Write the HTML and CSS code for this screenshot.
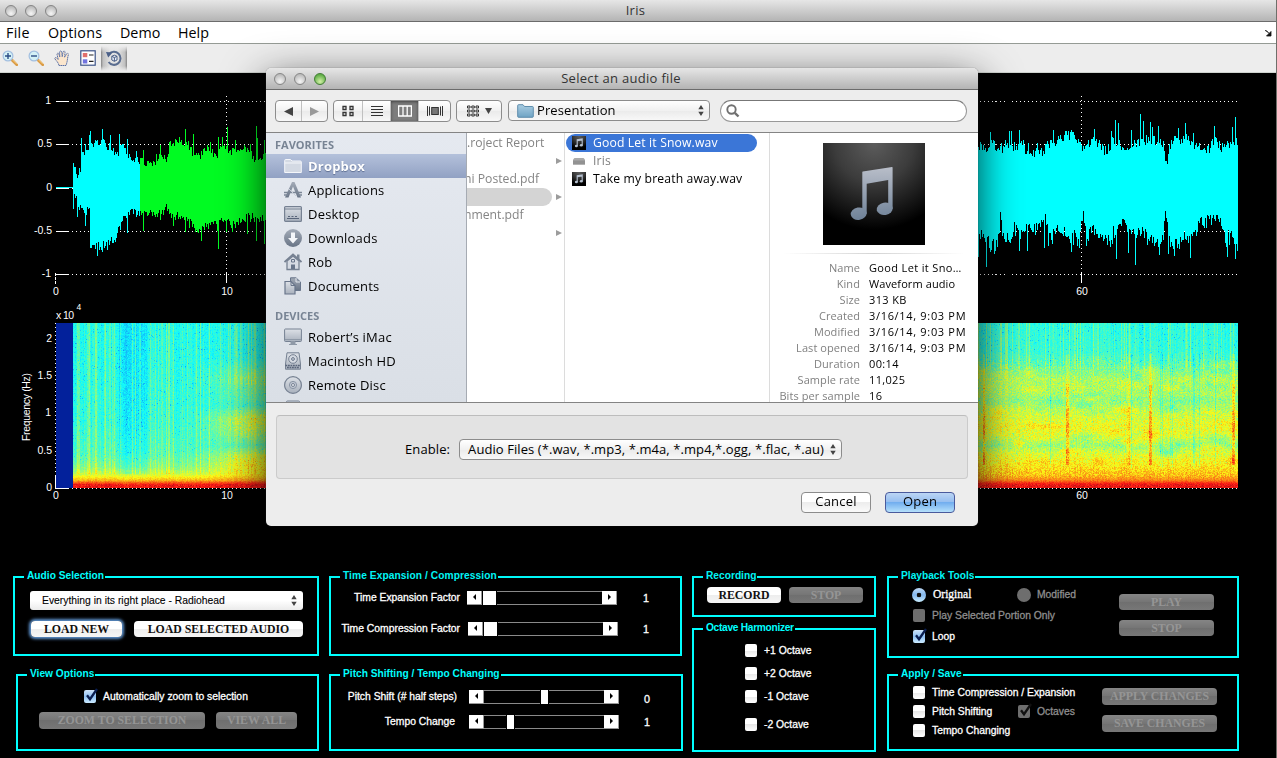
FILE: index.html
```html
<!DOCTYPE html>
<html lang="en">
<head>
<meta charset="utf-8">
<title>Iris</title>
<link rel="stylesheet" href="styles.css">
</head>
<body>
<svg width="0" height="0" class="defs">
  <defs>
    <linearGradient id="steel" x1="0" y1="0" x2="0" y2="1"><stop offset="0" stop-color="#a3abb7"/><stop offset="1" stop-color="#687486"/></linearGradient>
    <linearGradient id="pale" x1="0" y1="0" x2="0" y2="1"><stop offset="0" stop-color="#dde1e7"/><stop offset="1" stop-color="#a9b1bd"/></linearGradient>
    <linearGradient id="noteFill" gradientUnits="userSpaceOnUse" x1="0" y1="24" x2="0" y2="77"><stop offset="0" stop-color="#b9bec9"/><stop offset="1" stop-color="#6f8298"/></linearGradient>
    <radialGradient id="noteBg" cx=".5" cy="0" r=".85"><stop offset="0" stop-color="#5c5c5c"/><stop offset=".45" stop-color="#3c3c3c"/><stop offset="1" stop-color="#000"/></radialGradient>
    <linearGradient id="folder" x1="0" y1="0" x2="0" y2="1"><stop offset="0" stop-color="#a9cde2"/><stop offset="1" stop-color="#6fa3c4"/></linearGradient>
    <symbol id="song" viewBox="0 0 102 102">
      <rect width="102" height="102" fill="url(#noteBg)"/>
      <g fill="url(#noteFill)">
        <path d="M39.300 29Q39.300 28.500 39.800 28.400L69 24Q69.600 24 69.600 24.600V66H65.200V37L43.700 40.700V71H39.300z"/>
        <ellipse cx="35.700" cy="70.700" rx="8" ry="6.200" transform="rotate(-10 35.700 70.700)"/>
        <ellipse cx="61.700" cy="65.800" rx="8" ry="6.200" transform="rotate(-10 61.700 65.800)"/>
      </g>
    </symbol>
    <symbol id="songmini" viewBox="0 0 14 14">
      <rect width="14" height="14" fill="url(#noteBg)"/>
      <path d="M5.200 10V3.800L10.200 3V9M5.200 4.800 10.200 4" fill="none" stroke="#b5c0cf" stroke-width="1.100"/>
      <ellipse cx="4.400" cy="10" rx="1.500" ry="1.200" fill="#b5c0cf"/><ellipse cx="9.300" cy="9.300" rx="1.500" ry="1.200" fill="#b5c0cf"/>
    </symbol>
    <symbol id="check" viewBox="0 0 15 16"><path d="M3 8.200 6 12.200 13 2" fill="none" stroke="currentColor" stroke-width="2.300"/></symbol>
    <symbol id="updown" viewBox="0 0 6 11"><path d="M3 0 5.700 4.300H.3zM3 11 .3 6.700H5.700z" fill="#444"/></symbol>
  </defs>
</svg>

<header class="titlebar">
  <div class="lights"><i></i><i></i><i></i></div>
  <h1>Iris</h1>
</header>
<nav class="menubar">
  <span class="m-file">File</span><span class="m-options">Options</span><span class="m-demo">Demo</span><span class="m-help">Help</span>
  <svg class="undock" width="8" height="8" viewBox="0 0 8 8"><path d="M1 1.500C3 1.500 4 3 5 4.500M7 2.500V7H2.500z" fill="#111" stroke="#111" stroke-width=".8"/></svg>
</nav>
<div class="toolbar">
  <svg viewBox="0 0 16 16"><path d="M10 10 14.800 14.800" stroke="#d99a44" stroke-width="2.600" stroke-linecap="round"/><path d="M10.500 9.800 14.500 13.800" stroke="#f6cd80" stroke-width="1"/><circle cx="6" cy="6" r="4.900" fill="#d4f1f6" stroke="#a3bfe0" stroke-width="1.200"/><path d="M3 6H9M6 3V9" stroke="#2c4d86" stroke-width="1.400"/></svg>
  <svg viewBox="0 0 16 16"><path d="M10 10 14.800 14.800" stroke="#d99a44" stroke-width="2.600" stroke-linecap="round"/><path d="M10.500 9.800 14.500 13.800" stroke="#f6cd80" stroke-width="1"/><circle cx="6" cy="6" r="4.900" fill="#d4f1f6" stroke="#a3bfe0" stroke-width="1.200"/><path d="M3 6H9" stroke="#2c4d86" stroke-width="1.400"/></svg>
  <svg viewBox="0 0 16 16"><path d="M5 15.500C4.500 12.500 2 10.500.6 8.500 1.200 7 2.600 7.600 4.200 9.500L3 4.200C3.200 2.600 4.800 2.800 5 4.200L5.800 7 5.600 2C6 .4 7.500.6 7.800 2L8.200 6.800 9 2C9.600.6 11.200 1 11 2.400L10.600 7.200 12.600 3.800C13.600 2.800 14.800 3.600 14.300 5 13.400 8 13.500 11.500 12 15.500z" fill="#fbe6cd" stroke="#5b72a8" stroke-width="1" stroke-dasharray="1.600 .5"/></svg>
  <svg viewBox="0 0 16 16"><rect x=".8" y=".8" width="14.400" height="14.400" fill="#fff" stroke="#3c5489" stroke-width="1.200"/><rect x="2.800" y="3" width="4.500" height="4.200" fill="#e2706d"/><rect x="2.800" y="9.300" width="4.500" height="4.200" fill="#7274df"/><path d="M9 5H13.500M9 11.300H13.500" stroke="#222" stroke-width="1.200"/></svg>
  <div class="pressed"><svg viewBox="0 0 16 16"><path d="M3 4.200A6.500 6.500 0 1 1 2.600 12" fill="none" stroke="#5a6d90" stroke-width="2"/><path d="M0 2 6.500 2.600 2.200 7.600z" fill="#4b6088"/><path d="M5.800 6.300 8.400 5.200 11 6.300V10L8.400 11.300 5.800 10zM5.800 6.300 8.400 7.600 11 6.300M8.400 7.600V11.300" fill="#e8edf7" stroke="#4b6088" stroke-width="1"/></svg></div>
</div>

<section class="plots">
  <svg width="1276" height="488" viewBox="0 72 1276 488">
    <g class="grid">
      <path d="M59.500 101.500H1238M59.500 144.500H1238M59.500 188.500H1238M59.500 231.500H1238M59.500 274.500H1238M226.500 96V274M1081.500 96V274"/>
    </g>
    <path class="tick" d="M56 101.500H68M56 144.500H68M56 188.500H68M56 231.500H68M55 274.500H68M226.500 272V283M1081.500 272V283"/>
    <path class="tick dash" d="M55.500 273V284"/>
    <path id="wave" stroke="#0ff" fill="none" shape-rendering="crispEdges"/>
    <path id="selection" stroke="#00fb22" fill="none" shape-rendering="crispEdges"/>
    <g class="labels">
      <text x="51" y="104" text-anchor="end">1</text>
      <text x="52" y="147" text-anchor="end">0.5</text>
      <text x="52" y="191" text-anchor="end">0</text>
      <text x="52" y="234" text-anchor="end">-0.5</text>
      <text x="51" y="277" text-anchor="end">-1</text>
      <text x="56" y="295" text-anchor="middle">0</text>
      <text x="227" y="295" text-anchor="middle">10</text>
      <text x="1082" y="295" text-anchor="middle">60</text>
      <text x="56" y="319" textLength="18">x 10</text>
      <text x="76.500" y="309.500" class="exp">4</text>
      <text x="52" y="342" text-anchor="end">2</text>
      <text x="52" y="379" text-anchor="end">1.5</text>
      <text x="51" y="416" text-anchor="end">1</text>
      <text x="52" y="454" text-anchor="end">0.5</text>
      <text x="52" y="491" text-anchor="end">0</text>
      <text x="56" y="499" text-anchor="middle">0</text>
      <text x="227" y="499" text-anchor="middle">10</text>
      <text x="1082" y="499" text-anchor="middle">60</text>
      <text transform="translate(29.500 441) rotate(-90)" textLength="68">Frequency (Hz)</text>
    </g>
    <foreignObject x="56" y="323" width="1182" height="165"><canvas id="spectrum" width="1182" height="165"></canvas></foreignObject>
    <path class="grid" d="M55.500 323V488M56 488.500H1238"/>
    <path class="tick" d="M55.500 476V488.500H68"/>
  </svg>
</section>

<main class="controls">
  <div class="col col-a">
    <section class="panel p-audio">
      <h2>Audio Selection</h2>
      <div class="select"><span>Everything in its right place - Radiohead</span><svg width="6" height="11"><use href="#updown"/></svg></div>
      <div class="btns"><button class="b focus">LOAD NEW</button><button class="b wide">LOAD SELECTED AUDIO</button></div>
    </section>
    <section class="panel p-view">
      <h2>View Options</h2>
      <label class="opt"><b class="box on"><svg width="15" height="16"><use href="#check"/></svg></b><span>Automatically zoom to selection</span></label>
      <div class="btns"><button class="b off zoomsel">ZOOM TO SELECTION</button><button class="b off viewall">VIEW ALL</button></div>
    </section>
  </div>

  <div class="col col-b">
    <section class="panel p-time">
      <h2>Time Expansion / Compression</h2>
      <div class="srow s1"><span>Time Expansion Factor</span><div class="slider"><i class="l"></i><u></u><em></em><i class="r"></i></div><output>1</output></div>
      <div class="srow s2"><span>Time Compression Factor</span><div class="slider"><i class="l"></i><u></u><em></em><i class="r"></i></div><output>1</output></div>
    </section>
    <section class="panel p-pitch">
      <h2>Pitch Shifting / Tempo Changing</h2>
      <div class="srow s3"><span>Pitch Shift (# half steps)</span><div class="slider"><i class="l"></i><em class="before"></em><u class="thin"></u><em></em><i class="r"></i></div><output>0</output></div>
      <div class="srow s4"><span>Tempo Change</span><div class="slider"><i class="l"></i><em class="before"></em><u class="thin"></u><em></em><i class="r"></i></div><output>1</output></div>
    </section>
  </div>

  <div class="col col-c">
    <section class="panel p-rec">
      <h2>Recording</h2>
      <div class="btns"><button class="b">RECORD</button><button class="b off">STOP</button></div>
    </section>
    <section class="panel p-oct">
      <h2>Octave Harmonizer</h2>
      <label class="opt"><b class="box"></b><span>+1 Octave</span></label>
      <label class="opt"><b class="box"></b><span>+2 Octave</span></label>
      <label class="opt"><b class="box"></b><span>-1 Octave</span></label>
      <label class="opt"><b class="box"></b><span>-2 Octave</span></label>
    </section>
  </div>

  <div class="col col-d">
    <section class="panel p-play">
      <h2>Playback Tools</h2>
      <div class="split">
        <div class="opts">
          <div class="pair"><label class="opt serif"><b class="radio on"></b><span>Original</span></label><label class="opt dim second"><b class="radio"></b><span>Modified</span></label></div>
          <label class="opt dim"><b class="box"></b><span>Play Selected Portion Only</span></label>
          <label class="opt"><b class="box on"><svg width="15" height="16"><use href="#check"/></svg></b><span>Loop</span></label>
        </div>
        <div class="stack"><button class="b off">PLAY</button><button class="b off">STOP</button></div>
      </div>
    </section>
    <section class="panel p-apply">
      <h2>Apply / Save</h2>
      <div class="split">
        <div class="opts">
          <label class="opt"><b class="box"></b><span class="tce">Time Compression / Expansion</span></label>
          <div class="pair"><label class="opt"><b class="box"></b><span>Pitch Shifting</span></label><label class="opt dim second"><b class="box"><svg width="15" height="16"><use href="#check"/></svg></b><span>Octaves</span></label></div>
          <label class="opt"><b class="box"></b><span>Tempo Changing</span></label>
        </div>
        <div class="stack"><button class="b off">APPLY CHANGES</button><button class="b off">SAVE CHANGES</button></div>
      </div>
    </section>
  </div>
</main>

<div class="dialog" role="dialog">
  <header class="d-title"><div class="lights"><i></i><i></i><i class="go"></i></div><h1>Select an audio file</h1></header>
  <div class="d-tools">
    <div class="seg nav"><span><svg width="9" height="9"><path d="M0 4.500 9 0V9z" fill="#444"/></svg></span><span><svg width="9" height="9"><path d="M9 4.500 0 0V9z" fill="#999"/></svg></span></div>
    <div class="seg views">
      <span><svg width="12" height="12"><path d="M1 1.500H4V4.500H1zM8 1.500H11V4.500H8zM1 7.500H4V10.500H1zM8 7.500H11V10.500H8z" fill="none" stroke="#333" stroke-width="1.300"/></svg></span>
      <span><svg width="12" height="12"><path d="M0 1.500H12M0 4.500H12M0 7.500H12M0 10.500H12" stroke="#333" stroke-width="1.200"/></svg></span>
      <span class="on"><svg width="14" height="12"><path d="M.6 1H13.400V11H.6zM5 1V11M9.200 1V11" fill="none" stroke="#fff" stroke-width="1.300"/></svg></span>
      <span><svg width="16" height="12"><path d="M.5 1V11M2.500 1.500V10.500M13.500 1.500V10.500M15.500 1V11" stroke="#333"/><rect x="4.700" y="2.500" width="6.600" height="7" fill="#777" stroke="#333"/></svg></span>
    </div>
    <div class="seg arrange"><svg width="12" height="12"><path d="M.5 1H3V3H.5zM4.800 1H7.300V3H4.800zM9 1H11.500V3H9zM.5 5H3V7H.5zM4.800 5H7.300V7H4.800zM9 5H11.500V7H9zM.5 9H3V11H.5zM4.800 9H7.300V11H4.800zM9 9H11.500V11H9z" fill="none" stroke="#333"/></svg><svg width="7" height="6"><path d="M0 0H7L3.500 6z" fill="#444"/></svg></div>
    <div class="popup path"><svg width="17" height="14"><path d="M.7 3V1.500Q.7.7 1.500.7H6L7.500 2.500H15.500Q16.300 2.500 16.300 3.500V12.500Q16.300 13.300 15.500 13.300H1.500Q.7 13.300.7 12.500z" fill="url(#folder)" stroke="#5285a6" stroke-width=".9"/></svg><span>Presentation</span><svg class="ud" width="6" height="11"><use href="#updown"/></svg></div>
    <div class="search"><svg width="14" height="14"><circle cx="5.500" cy="5.500" r="4.200" fill="none" stroke="#707070" stroke-width="1.900"/><path d="M8.800 8.800 12.500 12.500" stroke="#707070" stroke-width="2.400"/></svg></div>
  </div>
  <div class="browser">
    <aside>
      <h3>FAVORITES</h3>
      <div class="item sel"><svg viewBox="0 0 18 18"><path d="M.7 3.500Q.7 2.500 1.700 2.500H6.500L8 4H16.300Q17.300 4 17.300 5V15.500H.7zM.7 6H17.300" fill="#d3d9e3" stroke="#f4f6fa"/></svg>Dropbox</div>
      <div class="item"><svg viewBox="0 0 18 18"><path d="M8 1H10.500L17 16.500H13.500L9 5.500 4.500 16.500H1z" fill="url(#steel)"/><path d="M0 11.500H18M0 14H4M14 14H18" stroke="#7b8696" stroke-width="1.700"/><path d="M5 8 12 15" stroke="#c9cfd9" stroke-width="1"/></svg>Applications</div>
      <div class="item"><svg viewBox="0 0 18 18"><rect x=".6" y="1.600" width="16.800" height="14.800" rx="1" fill="url(#pale)" stroke="#768192" stroke-width="1.200"/><path d="M1 4H17" stroke="#768192"/><path d="M3 13.500H15M4 11.500H6M7.500 11.500H9.500M11 11.500H13" stroke="#59657a" stroke-width="1.200"/></svg>Desktop</div>
      <div class="item"><svg viewBox="0 0 18 18"><circle cx="9" cy="9" r="9" fill="url(#steel)"/><path d="M7 3.500H11V9H14L9 14.500 4 9H7z" fill="#f4f6f9"/></svg>Downloads</div>
      <div class="item"><svg viewBox="0 0 18 18"><path d="M13 5V1.500H15.500V8" fill="#7b8696"/><path d="M3 8V16.500H15V8L9 3z" fill="#d6dbe3" stroke="#768192" stroke-width="1.300"/><path d="M.5 9 9 1.500 17.500 9" fill="none" stroke="#768192" stroke-width="1.700"/><path d="M7 16V11.500H11V16z" fill="#68758a"/><path d="M7.500 6.500H10.500V9H7.500z" fill="none" stroke="#68758a"/></svg>Rob</div>
      <div class="item"><svg viewBox="0 0 18 18"><path d="M6.500.8H12L16.500 5V13.500H6.500z" fill="url(#steel)" stroke="#68758a"/><path d="M12 1V5H16" fill="none" stroke="#e4e8ef"/><path d="M1 4.500H7L11 8.500V17H1z" fill="url(#pale)" stroke="#68758a" stroke-width="1.200"/><path d="M7 4.500V8.500H11" fill="none" stroke="#68758a"/></svg>Documents</div>
      <h3 class="dev">DEVICES</h3>
      <div class="item"><svg viewBox="0 0 18 18"><rect x=".6" y="1" width="16.800" height="12.500" rx=".8" fill="url(#pale)" stroke="#768192"/><path d="M1 11.500H17" stroke="#8f99a7"/><path d="M7 13.500H11V16H7zM5 16.500H13" fill="#8f99a7" stroke="#8f99a7"/></svg>Robert’s iMac</div>
      <div class="item"><svg viewBox="0 0 18 18"><path d="M3 .8H15L16.500 12V17.200H1.500V12z" fill="url(#pale)" stroke="#768192"/><path d="M1.500 13.500H16.500M3 15.500H15" stroke="#59657a" stroke-width="1.500" stroke-dasharray="1.800 .7"/><circle cx="9" cy="7" r="4.300" fill="#d5dae2" stroke="#768192"/><circle cx="9" cy="7" r="1.400" fill="none" stroke="#68758a"/></svg>Macintosh HD</div>
      <div class="item"><svg viewBox="0 0 18 18"><circle cx="9" cy="9" r="8.400" fill="url(#pale)" stroke="#768192" stroke-width="1.200"/><circle cx="9" cy="9" r="3.600" fill="#c2c9d4" stroke="#8a95a5"/><circle cx="9" cy="9" r="1.500" fill="#edf0f4" stroke="#768192"/></svg>Remote Disc</div>
      <div class="item"><svg viewBox="0 0 18 18"><rect x="2.500" y="1" width="13" height="15.500" rx="1" fill="#d5dae2" stroke="#768192"/></svg></div>
    </aside>
    <ul class="c1">
      <li>.roject Report</li>
      <li class="more"></li>
      <li class="cut">ni Posted.pdf</li>
      <li class="more pill"></li>
      <li class="cut">nment.pdf</li>
      <li class="more"></li>
    </ul>
    <ul class="c2">
      <li class="chosen"><svg width="14" height="14"><use href="#songmini"/></svg><span>Good Let it Snow.wav</span></li>
      <li class="dimmed"><svg width="14" height="14"><path d="M1 5.500 2.500 4H11.500L13 5.500V10.500H1z" fill="#aaa"/><path d="M1 6.500H13V10.500H1z" fill="#929292"/></svg><span>Iris</span></li>
      <li><svg width="14" height="14"><use href="#songmini"/></svg><span>Take my breath away.wav</span></li>
    </ul>
    <div class="preview">
      <svg class="art" width="102" height="102"><use href="#song"/></svg>
      <hr>
      <dl>
        <dt>Name</dt><dd>Good Let it Sno…</dd>
        <dt>Kind</dt><dd class="snug">Waveform audio</dd>
        <dt>Size</dt><dd>313 KB</dd>
        <dt>Created</dt><dd class="date">3/16/14, 9:03 PM</dd>
        <dt>Modified</dt><dd class="date">3/16/14, 9:03 PM</dd>
        <dt>Last opened</dt><dd class="date">3/16/14, 9:03 PM</dd>
        <dt>Duration</dt><dd>00:14</dd>
        <dt>Sample rate</dt><dd>11,025</dd>
        <dt>Bits per sample</dt><dd>16</dd>
      </dl>
    </div>
  </div>
  <footer>
    <div class="filter"><span>Enable:</span><div class="popup types"><span>Audio Files (*.wav, *.mp3, *.m4a, *.mp4,*.ogg, *.flac, *.au)</span><svg class="ud" width="6" height="11"><use href="#updown"/></svg></div></div>
    <div class="actions"><button class="aqua">Cancel</button><button class="aqua blue">Open</button></div>
  </footer>
</div>
<script src="plots.js"></script>
</body>
</html>
```

FILE: styles.css
```css
* { box-sizing: border-box; }
html, body { margin: 0; height: 758px; overflow: hidden; }
body {
  width: 1277px; display: flex; flex-direction: column; background: #000;
  font-family: "Open Sans", "Noto Sans", sans-serif; font-size: 13px; color: #000;
  border-right: 1px solid #6f6f6a;
}
h1, h2, h3, ul, dl, dd, hr { margin: 0; padding: 0; font-weight: normal; }
ul { list-style: none; }
button { font: inherit; border: 0; padding: 0; margin: 0; }
.defs { position: absolute; }

/* window chrome */
.titlebar, .d-title { display: flex; align-items: center; background: linear-gradient(#e6e6e6, #b4b4b4); border-bottom: 1px solid #6c6c6c; height: 22px; flex: none; }
.titlebar h1, .d-title h1 { flex: 1; text-align: center; font-size: 13px; color: #333; line-height: 20px; letter-spacing: .3px; }
.titlebar h1 { padding: 0 71px 2px 0; }
.lights { display: flex; gap: 8px; padding-left: 5px; width: 66px; flex: none; }
.lights i { width: 12px; height: 12px; flex: none; border-radius: 50%; border: 1px solid #858585; background: radial-gradient(circle at 50% 75%, #f5f5f5, #bcbcbc 75%); }
.lights .go { background: radial-gradient(circle at 50% 75%, #d3f0a8, #5fae45 75%); border-color: #417c34; }
.menubar { height: 22px; flex: none; display: flex; align-items: center; background: #fff; border-bottom: 1px solid #959b95; padding: 0 4px 0 6px; font-size: 14.300px; }
.m-file { width: 42px; letter-spacing: .3px; } .m-options { width: 72px; letter-spacing: .2px; } .m-demo { width: 58px; }
.undock { margin-left: auto; }
.toolbar { height: 29px; flex: none; display: flex; align-items: center; background: #ededed; border-bottom: 1px solid #cfd3cf; padding-left: 2px; gap: 10px; }
.toolbar svg { width: 16px; height: 16px; flex: none; }
.pressed { width: 26px; height: 25px; margin-left: -5px; display: grid; place-items: center; background: linear-gradient(#ededed, transparent 25%, transparent 80%, #ededed), linear-gradient(90deg, #858585, #c0c0c0 8%, #e2e2e2 35%, #e2e2e2 65%, #c0c0c0 92%, #858585); }

/* plots */
.plots { height: 488px; margin-top: -1px; flex: none; }
.plots svg, .plots canvas { display: block; }
.grid { stroke: #fff; stroke-dasharray: 1 3; fill: none; shape-rendering: crispEdges; }
.tick { stroke: #fff; fill: none; shape-rendering: crispEdges; }
.dash { stroke-dasharray: 3 1; }
.labels { font-family: "Liberation Sans", sans-serif; font-size: 10.500px; fill: #fff; }
.exp { font-size: 8.500px; }

/* control panels */
.controls { display: flex; gap: 10px; padding: 16px 0 0 13px; font-family: "Liberation Sans", Arial, sans-serif; font-size: 10.350px; color: #fff; -webkit-text-stroke: .3px; }
.col { display: flex; flex-direction: column; gap: 18px; }
.col-a { width: 306px; } .col-b { width: 353px; } .col-c { width: 184px; gap: 11px; margin-right: 1px; } .col-d { width: 352px; gap: 16px; }
.panel { border: 2px solid #0ff; }
.panel h2 { width: fit-content; height: 12px; line-height: 12px; margin: -8px 0 0 9px; padding: 0 1px 0 3px; background: #000; color: #0ff; font-size: 10.200px; font-weight: bold; white-space: nowrap; -webkit-text-stroke: 0; }
.p-audio, .p-time { height: 80px; }
.p-view { height: 77px; margin-left: 3px; }
.p-pitch { height: 77px; margin-right: -1px; }
.p-rec { height: 41px; } .p-oct { height: 124px; }
.p-play { height: 82px; } .p-apply { height: 77px; }
.p-oct h2 { letter-spacing: -.3px; }
.p-time h2 { letter-spacing: .08px; }

.select { margin: 9px 0 0 15px; width: 273px; height: 19px; border-radius: 3px; background: linear-gradient(#fff 50%, #ebebeb); color: #000; display: flex; align-items: center; justify-content: space-between; padding: 0 6px 1px 12px; -webkit-text-stroke: .1px; }
.btns { display: flex; }
.b { height: 16px; width: 74px; border-radius: 4px; background: linear-gradient(#fff 50%, #ededed 50%, #f6f6f6); font: bold 11.800px/15px "Liberation Serif", serif; color: #111; white-space: nowrap; -webkit-text-stroke: 0; }
.b.off { background: linear-gradient(#858585, #757575 50%, #6f6f6f 50%, #777); color: #959595; }
.p-audio .btns { margin: 11px 0 0 16px; gap: 12px; }
.focus { width: 91px; box-shadow: 0 0 3px 2px #5d93cf; }
.wide { width: 169px; }
.opt { display: flex; align-items: center; gap: 7px; height: 13px; line-height: 13px; white-space: nowrap; }
.box { width: 12px; height: 13px; flex: none; border-radius: 2px; background: linear-gradient(#fff 50%, #e8e8e8 50%, #fff); color: #111; }
.box svg { display: block; margin: -3px 0 0 0; }
.box.on { background: linear-gradient(#cfe4fa, #8fc0f2 50%, #cbebff); color: #0a1e50; }
.radio { width: 14px; height: 14px; margin: 0 -1px; flex: none; border-radius: 50%; background: #6e6e6e; }
.radio.on { background: radial-gradient(circle, #111 2px, transparent 2.600px), linear-gradient(#c0dbf7, #83b7ee 50%, #c9edff); }
.dim { color: #8e8e8e; } .dim .box { background: #6e6e6e; }
.serif span { font-family: "Liberation Serif", serif; font-size: 11.500px; margin-left: 1px; }
.p-view .opt { margin: 10px 0 9px 66px; }
.p-view .btns { margin-left: 21px; gap: 11px; }
.p-view .b { height: 17px; } .zoomsel { width: 166px; } .viewall { width: 81px; }

.srow { display: flex; align-items: center; height: 15px; }
.srow span { width: 129px; text-align: right; white-space: nowrap; margin-right: 7px; padding-bottom: 1px; }
.srow output { margin-left: 26px; font-size: 10.800px; }
.slider { width: 150px; height: 14px; display: flex; flex: none; }
.slider i { width: 15px; height: 14px; background: #fff; display: grid; place-items: center; border-right: 1px solid #999; border-bottom: 1px solid #999; }
.slider i::before { content: ""; border: 3px solid transparent; }
.slider .l::before { border-right-color: #000; margin-left: -3px; }
.slider .r::before { border-left-color: #000; margin-right: -3px; }
.slider u { width: 13px; background: #fff; margin: 0 1px; }
.slider .thin { width: 7px; }
.slider em { flex: 1; border: 1px solid #8a8a8a; border-left: 0; border-right: 0; }
.s1 { margin-top: 8px; } .s2 { margin-top: 16px; }
.s2 .slider { margin-left: 1px; } .s2 output { margin-left: 25px; }
.s3 { margin-top: 9px; } .s4 { margin-top: 10px; }
.s3 span { width: 126px; margin-right: 12px; } .s4 span { width: 124px; margin-right: 14px; }
.s3 output, .s4 output { margin-left: 25px; }
.s3 output { margin-top: 4px; }
.s3 .slider .before { flex: none; width: 56px; } .s4 .slider .before { flex: none; width: 22px; }

.p-rec .btns { margin: 5px 0 0 13px; gap: 8px; }
.p-oct .opt { margin: 10px 0 0 51px; }
.p-oct .opt:nth-of-type(4) { margin-top: 15px; }
.split { display: flex; justify-content: space-between; }
.pair { display: flex; height: 13px; }
.pair label:first-child { width: 105px; }
.opts { display: flex; flex-direction: column; margin-left: 24px; }
.p-play .opts { gap: 8px; margin-top: 6px; }
.p-apply .opts { gap: 6px; margin-top: 6px; }
.p-apply .opt span { padding-bottom: 1px; }
.stack { display: flex; flex-direction: column; }
.p-play .stack { margin: 12px 23px 0 0; gap: 10px; } .p-play .b { width: 95px; }
.p-apply .stack { margin: 8px 20px 0 0; gap: 10px; } .p-apply .b { width: 115px; height: 17px; }

/* file dialog floats over the main window */
.dialog { position: absolute; left: 266px; top: 68px; width: 712px; height: 458px; border-radius: 5px; overflow: hidden; background: #ededed; box-shadow: 0 14px 44px rgba(0,0,0,.8), 0 0 1px #555; display: flex; flex-direction: column; }
.d-title .lights { padding-left: 8px; }
.d-title h1 { padding-right: 68px; line-height: 21px; }
.d-tools { height: 43px; flex: none; display: flex; align-items: flex-start; padding: 10px 0 0 9px; border-bottom: 1px solid #848484; }
.seg, .popup { display: flex; border: 1px solid #8c8c8c; border-radius: 4px; height: 22px; background: linear-gradient(#fff, #f1f1f1 50%, #eaeaea 50%, #f8f8f8); }
.seg span { display: grid; place-items: center; flex: 1; }
.seg span + span { border-left: 1px solid #c0c0c0; }
.nav { width: 53px; margin-right: 5px; }
.views { width: 118px; margin-right: 5px; }
.views span { flex: 0 0 28px; }
.views span:last-child { flex: 1; }
.seg .on { background: #7d7d7d; box-shadow: inset 0 1px 3px #444; }
.arrange { width: 46px; align-items: center; justify-content: center; gap: 6px; margin-right: 6px; }
.popup { align-items: center; height: 21px; padding: 0 5px 0 8px; white-space: nowrap; }
.popup span { padding-bottom: 2px; }
.popup .ud { margin-left: auto; }
.path { width: 202px; margin-right: 10px; gap: 3px; letter-spacing: .1px; }
.search { width: 247px; height: 22px; border: 1px solid #999; border-top-color: #777; border-radius: 11px; background: #fff; padding: 3px 0 0 5px; }

.browser { height: 270px; flex: none; display: flex; background: #fff; border-bottom: 1px solid #848484; overflow: hidden; }
aside { width: 201px; flex: none; border-right: 1px solid #a6abb3; background: linear-gradient(#e5e9f0, #dadfe6); overflow: hidden; }
aside h3 { font-size: 11px; font-weight: bold; color: #788494; height: 21px; line-height: 22px; padding-left: 9px; padding-top: 1px; }
aside .dev { height: 27px; padding-top: 7px; }
.item { height: 24px; flex: none; display: flex; align-items: center; gap: 6px; padding-left: 18px; font-size: 13px; letter-spacing: .2px; }
.item svg { width: 18px; height: 18px; }
.sel { background: linear-gradient(#b4c1db, #91a1c3); color: #fff; font-weight: bold; text-shadow: 0 1px 1px #5e6f92; padding-bottom: 1px; }
.c1 { width: 98px; flex: none; border-right: 1px solid #dcdcdc; padding-top: 1px; color: #858585; overflow: hidden; }
.c1 li, .c2 li { height: 18px; line-height: 17px; font-size: 12.200px; white-space: nowrap; }
.c1 .cut { margin-left: -3px; }
.more { display: flex; align-items: center; justify-content: space-between; padding: 0 2px 1px 0; }
.more::before { content: ""; width: 85px; height: 18px; border-radius: 0 9px 9px 0; }
.pill::before { background: #d4d4d4; }
.more::after { content: ""; border-left: 6px solid #9c9c9c; border-top: 3.500px solid transparent; border-bottom: 3.500px solid transparent; }
.c2 { width: 205px; flex: none; border-right: 1px solid #dcdcdc; padding: 1px 12px 0 1px; letter-spacing: .14px; }
.c2 li { display: flex; align-items: center; gap: 7px; padding-left: 6px; border-radius: 9px; }
.c2 span { padding-bottom: 2px; }
.chosen { background: #3b76d7; color: #fff; }
.dimmed { color: #808080; }
.preview { flex: 1; min-width: 0; }
.art { display: block; margin: 10px 0 0 53px; }
.preview hr { border: 0; height: 1px; margin: 8px 13px 6px; background: linear-gradient(90deg, transparent, #d4d4d4 50%, transparent); }
.preview dl { display: grid; grid-template-columns: 90px 1fr; column-gap: 9px; grid-auto-rows: 16px; font-size: 11px; line-height: 16px; white-space: nowrap; }
dt { text-align: right; color: #808080; margin-left: -10px; letter-spacing: .08px; }
dd { letter-spacing: .35px; }
dd.snug { letter-spacing: .1px; }
dd.date { letter-spacing: .68px; }

footer { flex: 1; padding: 12px 10px 0; }
.filter { height: 64px; border: 1px solid #cbcbcb; border-top-color: #bdbdbd; border-radius: 4px; background: #e3e3e3; display: flex; align-items: center; padding: 5px 0 0 128px; gap: 9px; }
.filter > span { padding-bottom: 1px; letter-spacing: .1px; }
.types { width: 383px; letter-spacing: .08px; }
.actions { display: flex; justify-content: flex-end; gap: 14px; padding: 13px 13px 0 0; }
.aqua { width: 70px; height: 21px; border: 1px solid #8c8c8c; border-radius: 4px; background: linear-gradient(#fff 50%, #ededed 50%, #fafafa); line-height: 17px; padding-bottom: 2px; letter-spacing: .2px; }
.aqua.blue { border-color: #4a5a9c; background: linear-gradient(#bcd5f4, #94bdf0 50%, #72aeef 50%, #b5e0fb); }
```

FILE: plots.js
```js
// Seeded generator keeps both plots identical on every load.
let seed = 20140316;
const rnd = () => {
  seed = (seed * 1664525 + 1013904223) >>> 0;
  return seed / 4294967296;
};
const lerp = (nodes, x) => {
  for (let i = 1; i < nodes.length; i++) {
    if (x <= nodes[i][0]) {
      const [x0, y0] = nodes[i - 1], [x1, y1] = nodes[i];
      return y0 + (y1 - y0) * Math.max(0, (x - x0) / (x1 - x0));
    }
  }
  return nodes[nodes.length - 1][1];
};

const top_ = [[73,165],[77,174],[80,168],[82,153],[85,154],[90,145],[92,144],[96,141],[104,142],[108,147],[113,150],[118,156],[121,143],[126,151],[132,158],[139,160],[145,163],[156,165],[160,153],[167,158],[169,144],[176,140],[183,141],[188,144],[193,154],[200,157],[206,147],[212,152],[217,159],[221,143],[226,150],[235,150],[245,147],[255,159],[262,155],[270,148],[600,145],[978,142],[985,151],[990,142],[1000,149],[1005,142],[1015,151],[1020,143],[1028,151],[1040,151],[1050,143],[1058,140],[1065,133],[1076,136],[1082,149],[1090,140],[1096,140],[1106,151],[1113,140],[1120,144],[1130,147],[1140,139],[1150,139],[1160,139],[1164,145],[1165,161],[1167,158],[1169,145],[1175,138],[1180,145],[1186,136],[1195,146],[1205,150],[1215,141],[1225,149],[1232,137],[1237,141]];
const bottom = [[73,197],[76,198],[79,208],[85,211],[89,213],[90,245],[95,247],[106,246],[110,241],[115,242],[118,227],[122,221],[127,219],[132,212],[139,216],[145,214],[150,213],[160,215],[166,209],[170,216],[180,216],[188,222],[195,231],[200,230],[210,226],[220,222],[226,220],[232,226],[240,222],[250,216],[256,220],[266,217],[600,230],[978,235],[984,236],[990,245],[995,247],[999,240],[1000,209],[1002,232],[1010,240],[1015,222],[1020,238],[1025,230],[1035,230],[1045,219],[1050,237],[1060,230],[1070,239],[1080,233],[1083,218],[1086,240],[1092,230],[1100,236],[1106,244],[1114,232],[1122,226],[1130,229],[1140,232],[1150,239],[1158,246],[1163,240],[1165,208],[1167,220],[1168,242],[1178,247],[1185,236],[1190,243],[1200,224],[1210,222],[1220,222],[1226,238],[1230,230],[1238,250]];
const spikesUp = {73:163,81:138,85:144,89:135,90:131,102:129,110:135,119:134,127:139,136:151,143:150,156:154,160:145,185:129,193:134,218:137,222:137,227:127,235:140,256:126,257:138,264:140,990:132,1009:131,1011:131,1019:130,1053:130,1094:129,1111:131,1115:120,1118:123,1131:130,1140:114,1143:121,1150:122,1152:127,1158:126,1178:128,1185:123,1214:126,1232:127,1235:117};
const spikesDown = {73:209,77:217,85:226,90:248,102:252,127:233,143:231,160:220,173:226,185:232,201:241,218:249,226:232,247:234,256:241,264:244,978:257,986:267,990:252,994:254,1019:251,1027:251,1044:248,1048:246,1052:244,1071:252,1079:248,1086:246,1110:247,1116:259,1128:253,1135:265,1159:255,1168:254,1190:258,1227:257,1235:259};

let cyan = 'M56 187.500H73', green = '';
for (let x = 73; x < 1238; x++) {
  const late = x > 900 ? 1.4 : 1;
  let t = lerp(top_, x) + (rnd() - .4) * 8 * late;
  let b = lerp(bottom, x) - (rnd() - .4) * 9 * late;
  if (rnd() < .1 * late) t -= rnd() * 8;
  if (rnd() < .1 * late) b += rnd() * 10;
  if (spikesUp[x]) t = spikesUp[x];
  if (spikesDown[x]) b = spikesDown[x];
  const seg = `M${x}.500 ${Math.round(t)}V${Math.round(b)}`;
  if (x < 140 || x > 900) cyan += seg; else green += seg;
}
document.getElementById('wave').setAttribute('d', cyan);
document.getElementById('selection').setAttribute('d', green);

// Spectrogram: jet colour map over time/frequency energy.
const cv = document.getElementById('spectrum');
const ctx = cv.getContext('2d');
const W = cv.width, H = cv.height;
const img = ctx.createImageData(W, H);
const clamp = v => Math.max(0, Math.min(1, v));
const jet = v => [1.5 - Math.abs(4 * v - 3), 1.5 - Math.abs(4 * v - 2), 1.5 - Math.abs(4 * v - 1)].map(clamp);
const base = [[0,.39],[30,.395],[60,.40],[100,.41],[130,.44],[143,.49],[150,.56],[154,.64],[157,.70],[159,.79],[161,.86],[165,.89]];
const rich = [[0,.40],[28,.41],[42,.46],[55,.54],[68,.54],[78,.51],[90,.57],[103,.61],[112,.59],[122,.52],[130,.59],[142,.64],[152,.69],[157,.76],[160,.86],[165,.89]];
const band = [[0,0],[35,0],[55,.09],[72,.05],[82,.02],[95,.16],[102,.14],[110,.10],[122,.02],[133,.13],[142,.13],[152,.05],[165,0]];
const blobs = [];
for (let i = 0; i < 260; i++) blobs.push([700 + rnd() * 482, 36 + rnd() * 104, 4 + rnd() * 14, 2 + rnd() * 5, (rnd() - .42) * .11]);
const hot = [[984,1],[1067,1],[1150,1],[1233,1],[1128,.45]];
for (let x = 0; x < W; x++) {
  const px = x + 56;
  let stripe = (rnd() - .5) * .05;
  if (rnd() < .2) stripe += .07;
  if (px > 118 && px < 147) stripe -= .045;
  const coldRun = px > 900 && rnd() < .04 ? -.07 : 0;
  const near = blobs.filter(b => Math.abs(b[0] - x) < b[2]);
  for (let y = 0; y < H; y++) {
    let c;
    if (px < 73) c = [3, 33, 155];
    else {
      const grow = clamp((px - 188) / 62);
      let v = px < 620
        ? lerp(base, y) + lerp(band, y) * grow + (rnd() < .2 ? lerp(band, y) * grow * .5 : 0)
        : lerp(rich, y);
      v += stripe * (y > 150 ? .2 : y > 45 && px > 620 ? .35 : grow > .5 && y > 60 ? .6 : 1);
      v += (rnd() - .5) * (px > 620 && y > 35 && y < 155 ? .11 : .06);
      if (rnd() < .03 && y < 140) v -= .08;
      if (y > 30 && y < 145) v += coldRun;
      for (const b of near) {
        const d = ((x - b[0]) / b[2]) ** 2 + ((y - b[1]) / b[3]) ** 2;
        if (d < 1) v += b[4] * (1 - d);
      }
      if (y > 30 && y < 142) for (const [hx, k] of hot) {
        if (Math.abs(px - hx) < 2) v += k * (y > 60 ? .13 : .06) * (rnd() * .6 + .6);
      }
      if (y > 160 && y < 164 && rnd() < .4) v += .04;
      const j = jet(Math.min(v, .94));
      c = [18 + j[0] * 232, 22 + j[1] * 228, 22 + j[2] * 228];
    }
    img.data.set([c[0], c[1], c[2], 255], (y * W + x) * 4);
  }
}
ctx.putImageData(img, 0, 0);
```
